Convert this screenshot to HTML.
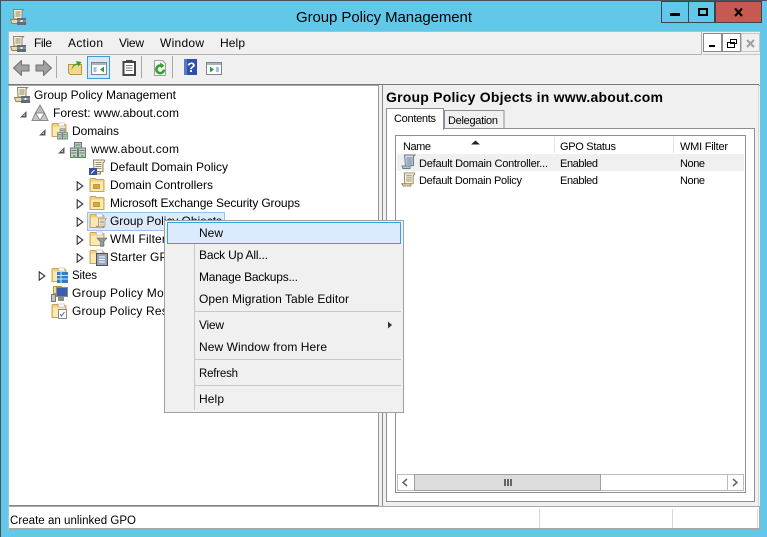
<!DOCTYPE html>
<html><head><meta charset="utf-8"><title>Group Policy Management</title>
<style>
html,body{margin:0;padding:0;background:#62c8ea;overflow:hidden}
svg{display:block}
text{font-family:"Liberation Sans",sans-serif;font-size:12px;fill:#000}
.s{font-size:11px}
.m{font-size:11.500px}
.r{shape-rendering:crispEdges}
</style></head><body>
<svg width="767" height="537" viewBox="0 0 767 537" xmlns="http://www.w3.org/2000/svg">
<defs>
<symbol id="scroll" viewBox="0 0 16 16"><path d="M3.500 1h10.500c.8 0 1 .8.500 1.500L13 4v8.500l-9 .5z" fill="#f7f0da" stroke="#8d8468"/><path d="M5.500 3.500h6M5.500 5.500h6M5.500 7.500h6M5.500 9.500h6" stroke="#9a9178"/><path d="M.8 12.500h9.700v2.500H2.500z" fill="#ead9a4" stroke="#8d8468"/></symbol>
<symbol id="gpm" viewBox="0 0 16 16"><path d="M3.500 .5h10l-1.500 1.500v8h-8z" fill="#f7f0da" stroke="#8d8468"/><path d="M5.500 3h5M5.500 5h5M5.500 7h5" stroke="#8d8468"/><path d="M.5 10.500h7v4H2z" fill="#ead9a4" stroke="#8d8468"/><rect x="7" y="9" width="9" height="7" fill="#5f6c76"/><rect x="7" y="11.500" width="9" height="1" fill="#aab4bb"/><rect x="10.500" y="11" width="2" height="2" fill="#eee"/></symbol>
<symbol id="folder" viewBox="0 0 16 16"><path d="M1 14.500V2.500q0-1 1-1h4q1 0 1 1h7q1 0 1 1v11z" fill="#f3cf7a" stroke="#c9a45a"/><rect x="2" y="4.500" width="12" height="9.500" fill="#fbe9b0"/><rect x="4.500" y="7.500" width="6" height="4" fill="#d4ab3e" stroke="#a88327" stroke-width=".7"/></symbol>
<symbol id="fplain" viewBox="0 0 16 16"><path d="M1 14.500V2.500q0-1 1-1h4q1 0 1 1h7q1 0 1 1v11z" fill="#f3cf7a" stroke="#c9a45a"/><rect x="2" y="4.500" width="12" height="9.500" fill="#fbe9b0"/><rect x="7.500" y="1" width="6" height="3" fill="#fff" stroke="#b4b4b4" stroke-width=".6"/></symbol>
<symbol id="srv" viewBox="0 0 16 16"><rect x="4.500" y=".5" width="7" height="6" fill="#bfc9c4" stroke="#6d7a76"/><rect x=".5" y="6" width="7" height="9.500" fill="#c7cfca" stroke="#6d7a76"/><rect x="8.500" y="6" width="7" height="9.500" fill="#c7cfca" stroke="#6d7a76"/><path d="M1.500 8.500h5M9.500 8.500h5M1.500 11h5M9.500 11h5M5.500 3h5" stroke="#6d7a76"/><rect x="3" y="13" width="2.500" height="2.500" fill="#45c445"/><rect x="11" y="13" width="2.500" height="2.500" fill="#45c445"/><rect x="7" y="5" width="2" height="2" fill="#45c445"/></symbol>
<symbol id="open" viewBox="0 0 8 10"><path d="M1.200 .8v8.400L6.800 5z" fill="#fff" stroke="#333" stroke-width="1.100"/></symbol>
<symbol id="exp" viewBox="0 0 8 8"><path d="M7.500 1v6.500H1z" fill="#595959"/><path d="M6 3.800V6H3.700z" fill="#bdbdbd"/></symbol>
</defs>

<rect class="r" width="767" height="537" fill="#62c8ea"/>
<rect class="r" x="0" y="0" width="767" height="1" fill="#46535b"/>
<rect class="r" x="0" y="0" width="1" height="537" fill="#46535b"/>
<use href="#gpm" x="10" y="9" width="16" height="16"/>
<text x="296" y="22" style="font-size:15px" textLength="176">Group Policy Management</text>

<!-- caption buttons -->
<rect class="r" x="661.500" y="1.500" width="27" height="21" fill="#62c8ea" stroke="#3a464e"/>
<rect class="r" x="688.500" y="1.500" width="26" height="21" fill="#62c8ea" stroke="#3a464e"/>
<rect class="r" x="715.500" y="1.500" width="46" height="21" fill="#c75a50" stroke="#3a464e"/>
<rect class="r" x="670" y="13" width="10" height="3" fill="#000"/>
<rect class="r" x="699" y="9" width="8" height="6" fill="none" stroke="#000" stroke-width="2"/>
<path d="M735 8.500l7 7.500M742 8.500l-7 7.500" stroke="#000" stroke-width="2.200"/>

<!-- client -->
<rect class="r" x="8" y="32" width="752" height="498" fill="#f0f0f0"/>
<rect class="r" x="8" y="31" width="752" height="1" fill="#9fc3d3"/>
<rect class="r" x="8" y="32" width="1" height="498" fill="#9fc3d3"/>

<!-- menu -->
<use href="#gpm" x="10" y="36" width="16" height="16"/>
<text x="34" y="47" textLength="18">File</text>
<text x="68" y="47" textLength="35">Action</text>
<text x="119" y="47" textLength="25">View</text>
<text x="160" y="47" textLength="44">Window</text>
<text x="220" y="47" textLength="25">Help</text>
<rect class="r" x="8" y="54" width="694" height="1" fill="#b4b4b4"/>
<rect class="r" x="701" y="32" width="1" height="23" fill="#b4b4b4"/>
<rect class="r" x="703" y="54" width="57" height="1" fill="#c8c8c8"/>
<rect class="r" x="703.500" y="33.500" width="18" height="18" fill="#fff" stroke="#8a8a8a"/>
<rect class="r" x="722.500" y="33.500" width="18" height="18" fill="#fff" stroke="#8a8a8a"/>
<rect class="r" x="741.500" y="33.500" width="18" height="18" fill="#f0f0f0" stroke="#c8c8c8"/>
<rect class="r" x="709" y="45" width="6" height="2" fill="#000"/>
<rect class="r" x="727.500" y="42.500" width="7" height="5" fill="#fff" stroke="#000"/>
<rect class="r" x="730.500" y="39.500" width="6" height="4" fill="none" stroke="#000"/>
<path d="M747 40l7 7M754 40l-7 7" stroke="#9aa0a6" stroke-width="2"/>

<!-- toolbar -->
<path d="M13.500 68l8-7.500v4.500h7.500v6h-7.500v4.500z" fill="#a2a2a2" stroke="#6f6f6f" stroke-linejoin="round"/>
<path d="M51.500 68l-8-7.500v4.500h-7.500v6h7.500v4.500z" fill="#a2a2a2" stroke="#6f6f6f" stroke-linejoin="round"/>
<rect class="r" x="56" y="56" width="1" height="22" fill="#a8a8a8"/>
<path d="M68.500 64.500h13v10h-11l-2-2z" fill="#f5d98a" stroke="#b8963f"/>
<path d="M71.500 71c0-5 3-7.500 5.500-7.500l-1-2.500 5.500 1-3 4.500-1-1.800c-2 0-5.500 2.300-6 6.300z" fill="#3f9f2f"/>
<rect class="r" x="87.500" y="56.500" width="22" height="22" fill="#d8e8f8" stroke="#3a9bd8"/>
<rect class="r" x="91.500" y="62.500" width="15" height="12" fill="#fff" stroke="#7b8790"/>
<rect class="r" x="92" y="63" width="14" height="2" fill="#a8b4bc"/>
<path d="M104 66.500v6l-4-3z" fill="#2ca02c"/>
<rect class="r" x="93.500" y="67" width="3" height="5" fill="#9cc4e4"/>
<path d="M123.500 62h11.500v13h-11.500z" fill="#fff" stroke="#444" stroke-width="2"/>
<rect class="r" x="126" y="60" width="6.500" height="3" fill="#444"/>
<path d="M126 65.500h6.500M126 68h6.500M126 70.500h6.500" stroke="#777"/>
<rect class="r" x="141" y="56" width="1" height="22" fill="#a8a8a8"/>
<path d="M154.500 60.500h8l3 3v12h-11z" fill="#f6f6f6" stroke="#a0a0a0"/>
<path d="M164 69.500a3.800 3.800 0 1 1-1.500-3.200" fill="none" stroke="#2fa32f" stroke-width="2.600"/>
<path d="M160 62.500l4.500 3-3.500 3z" fill="#2fa32f"/>
<rect class="r" x="172" y="56" width="1" height="22" fill="#a8a8a8"/>
<rect class="r" x="184" y="59" width="13" height="16" fill="#2f4fa8"/>
<rect class="r" x="184" y="59" width="3" height="16" fill="#5a78c8"/>
<text x="187" y="72" style="font-size:14px;font-weight:bold;fill:#fff">?</text>
<rect class="r" x="206.500" y="62.500" width="15" height="12" fill="#fff" stroke="#7b8790"/>
<rect class="r" x="207" y="63" width="14" height="2" fill="#a8b4bc"/>
<path d="M210 66.500v6l4-3z" fill="#2ca02c"/>
<rect class="r" x="216" y="67" width="3" height="5" fill="#9cc4e4"/>

<rect class="r" x="8" y="84" width="751" height="1" fill="#777"/>
<rect class="r" x="8" y="85" width="752" height="1" fill="#a8a8a8"/>

<!-- tree pane -->
<rect class="r" x="9" y="86" width="369" height="419" fill="#fff"/>
<rect class="r" x="378" y="85" width="1" height="421" fill="#999"/>
<rect class="r" x="9" y="505" width="370" height="1" fill="#888"/>

<use href="#gpm" x="14" y="87" width="16" height="16"/>
<text x="34" y="99" textLength="142">Group Policy Management</text>
<use href="#exp" x="19" y="110" width="8" height="8"/>
<path d="M40 105l-4.500 8h9z" fill="#bdbdbd" stroke="#8a8a8a"/><path d="M35.500 113l-3.500 7.500h8zM44.500 113l-4.500 7.500h8z" fill="#c9c9c9" stroke="#8a8a8a"/>
<text x="53" y="117" textLength="126">Forest: www.about.com</text>
<use href="#exp" x="38" y="128" width="8" height="8"/>
<use href="#fplain" x="51" y="122" width="16" height="16"/><use href="#srv" x="57" y="128" width="11" height="12"/>
<text x="72" y="135" textLength="47">Domains</text>
<use href="#exp" x="57" y="146" width="8" height="8"/>
<use href="#srv" x="70" y="142" width="16" height="16"/>
<text x="91" y="153" textLength="88">www.about.com</text>
<use href="#scroll" x="90" y="159" width="16" height="16"/><rect class="r" x="89" y="168" width="8" height="7" fill="#3a4fa0"/><path d="M91 173.500l3.500-3.500" stroke="#fff"/>
<text x="110" y="171" textLength="118">Default Domain Policy</text>
<use href="#open" x="76" y="181" width="8" height="10"/>
<use href="#folder" x="89" y="177" width="16" height="16"/>
<text x="110" y="189" textLength="103">Domain Controllers</text>
<use href="#open" x="76" y="199" width="8" height="10"/>
<use href="#folder" x="89" y="195" width="16" height="16"/>
<text x="110" y="207" textLength="190">Microsoft Exchange Security Groups</text>

<rect class="r" x="87.500" y="212.500" width="137" height="18" fill="#dcebfc" stroke="#9bbfe6"/>
<use href="#open" x="76" y="217" width="8" height="10"/>
<use href="#fplain" x="89" y="213" width="16" height="16"/><use href="#scroll" x="96" y="217" width="11" height="12"/>
<text x="110" y="225" textLength="112">Group Policy Objects</text>
<use href="#open" x="76" y="235" width="8" height="10"/>
<use href="#fplain" x="89" y="231" width="16" height="16"/><path d="M97 238h10l-3.500 4v4.500h-3V242z" fill="#8a9aa8" stroke="#5a6a78" stroke-width=".6"/>
<text x="110" y="243" textLength="62">WMI Filters</text>
<use href="#open" x="76" y="253" width="8" height="10"/>
<use href="#fplain" x="89" y="249" width="16" height="16"/><rect class="r" x="96.500" y="253.500" width="11" height="12" fill="#8fa6c4" stroke="#5d4b44"/><path d="M99 257h6M99 259.500h6M99 262h6" stroke="#fff"/>
<text x="110" y="261" textLength="73">Starter GPOs</text>
<use href="#open" x="38" y="271" width="8" height="10"/>
<use href="#fplain" x="51" y="267" width="16" height="16"/><rect class="r" x="57" y="272" width="11" height="11" fill="#2f7fc8"/><path d="M61 272v11M57 275.500h11M57 279h11" stroke="#cfe6f8"/>
<text x="72" y="279" class="m" textLength="25">Sites</text>
<rect class="r" x="53.500" y="286.500" width="8" height="7" fill="#f5d98a" stroke="#b8963f"/>
<rect class="r" x="56.500" y="287.500" width="11" height="9" fill="#3a5fb0" stroke="#8a8a8a"/>
<rect class="r" x="51.500" y="294.500" width="4" height="7" fill="#b8c8b8" stroke="#777"/>
<rect class="r" x="58" y="296" width="6" height="5" fill="#8a8a8a"/>
<text x="72" y="297" textLength="125">Group Policy Modeling</text>
<use href="#fplain" x="51" y="303" width="16" height="16"/><rect class="r" x="58.500" y="309.500" width="8" height="9" fill="#fff" stroke="#889"/><path d="M60 314l1.500 2 3-4" fill="none" stroke="#3a6ab0"/>
<text x="72" y="315" textLength="115">Group Policy Results</text>

<!-- splitter / right pane -->
<rect class="r" x="379" y="85" width="4" height="421" fill="#f0f0f0"/>
<rect class="r" x="382" y="85" width="1" height="421" fill="#8a8a8a"/>
<rect class="r" x="383" y="85" width="375" height="421" fill="#f0f0f0"/>
<rect class="r" x="758" y="85" width="1" height="421" fill="#d8d8d8"/>
<text x="386" y="102" style="font-size:14px;font-weight:bold" textLength="277">Group Policy Objects in www.about.com</text>

<!-- tabs -->
<rect class="r" x="386.500" y="128.500" width="368" height="373" fill="#fff" stroke="#8c8f96"/>
<rect class="r" x="444.500" y="110.500" width="59.500" height="18" fill="#f0f0f0" stroke="#8c8f96"/>
<rect class="r" x="386.500" y="108.500" width="57" height="21" fill="#fff" stroke="#8c8f96"/>
<rect class="r" x="387" y="128" width="56" height="2" fill="#fff"/>
<text x="394" y="122" class="s" textLength="42">Contents</text>
<text x="448" y="124" class="s" textLength="50">Delegation</text>

<!-- list -->
<rect class="r" x="395.500" y="135.500" width="350" height="357" fill="#fff" stroke="#8c8f96"/>
<rect class="r" x="554" y="137" width="1" height="16" fill="#e2e2e2"/>
<rect class="r" x="673" y="137" width="1" height="16" fill="#e2e2e2"/>
<path d="M471 144.500l4.500-4 4.500 4z" fill="#222"/>
<text x="403" y="150" class="s" textLength="28">Name</text>
<text x="560" y="150" class="s" textLength="56">GPO Status</text>
<text x="680" y="150" class="s" textLength="48">WMI Filter</text>
<rect class="r" x="397" y="154" width="347" height="17" fill="#f0f0f0"/>
<path d="M404.500 155h10.500l-1.500 1.500v9l-8 1z" fill="#cfdcea" stroke="#6c7c8e"/><path d="M406.500 158h6M406.500 160h6M406.500 162h6M406.500 164h6" stroke="#6c7c8e"/><path d="M402 166h8v2.500h-7z" fill="#b4c8dc" stroke="#6c7c8e"/>
<text x="419" y="167" class="s" textLength="129">Default Domain Controller...</text>
<text x="560" y="167" class="s" textLength="38">Enabled</text>
<text x="680" y="167" class="s" textLength="25">None</text>
<use href="#scroll" x="401" y="172" width="15" height="15"/>
<text x="419" y="184" class="s" textLength="103">Default Domain Policy</text>
<text x="560" y="184" class="s" textLength="38">Enabled</text>
<text x="680" y="184" class="s" textLength="25">None</text>

<!-- scrollbar -->
<rect class="r" x="397.500" y="474.500" width="346" height="16" fill="#fff" stroke="#bcbcbc"/>
<rect class="r" x="414.500" y="474.500" width="186" height="16" fill="#dcdcdc" stroke="#a0a0a0"/>
<rect class="r" x="727" y="475" width="1" height="15" fill="#bcbcbc"/>
<rect class="r" x="504" y="479" width="2" height="7" fill="#666"/><rect class="r" x="507" y="479" width="2" height="7" fill="#666"/><rect class="r" x="510" y="479" width="2" height="7" fill="#666"/>
<path d="M407 479l-4 3.500 4 3.500M733 479l4 3.500-4 3.500" fill="none" stroke="#666" stroke-width="1.500"/>

<!-- status -->
<rect class="r" x="9" y="507" width="750" height="21" fill="#fff"/>
<rect class="r" x="9" y="506" width="750" height="1" fill="#a8a8a8"/>
<rect class="r" x="9" y="528" width="751" height="2" fill="#a8a8a8"/>
<rect class="r" x="759" y="506" width="1" height="24" fill="#a8a8a8"/>
<rect class="r" x="539" y="509" width="1" height="19" fill="#d8d8d8"/>
<rect class="r" x="672" y="509" width="1" height="19" fill="#d8d8d8"/>
<rect class="r" x="757" y="509" width="1" height="19" fill="#d8d8d8"/>
<text x="10" y="524" class="m" textLength="126">Create an unlinked GPO</text>

<!-- context menu -->
<rect class="r" x="164.500" y="220.500" width="239" height="192" fill="#f0f0f0" stroke="#a0a0a0"/>
<rect class="r" x="194" y="244" width="1" height="166" fill="#c8c8c8"/>
<rect class="r" x="167.500" y="222.500" width="233" height="21" fill="#dbeafc" stroke="#3aa0da"/>
<text x="199" y="237" textLength="24">New</text>
<text x="199" y="259" textLength="69">Back Up All...</text>
<text x="199" y="281" textLength="99">Manage Backups...</text>
<text x="199" y="303" textLength="150">Open Migration Table Editor</text>
<rect class="r" x="195" y="311" width="206" height="1" fill="#c8c8c8"/>
<text x="199" y="329" textLength="25">View</text>
<path d="M388 321.500l4 3.500-4 3.500z" fill="#333"/>
<text x="199" y="351" textLength="128">New Window from Here</text>
<rect class="r" x="195" y="359" width="206" height="1" fill="#c8c8c8"/>
<text x="199" y="377" class="m" textLength="39">Refresh</text>
<rect class="r" x="195" y="385" width="206" height="1" fill="#c8c8c8"/>
<text x="199" y="403" textLength="25">Help</text>
</svg>
</body></html>
